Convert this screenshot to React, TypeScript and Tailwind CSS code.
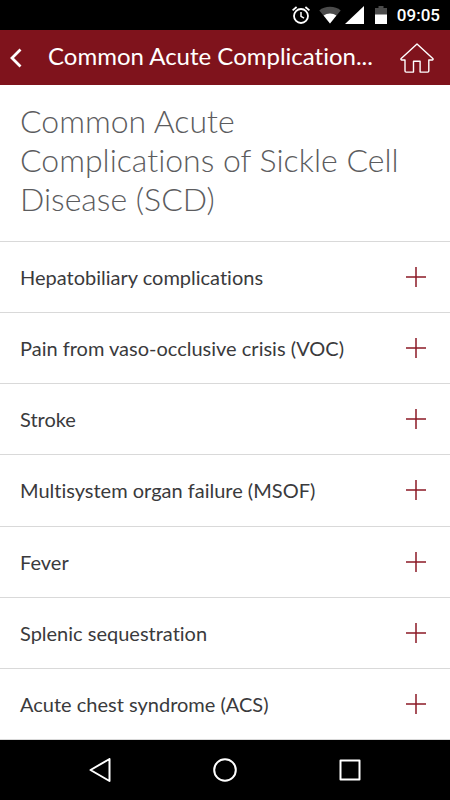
import { useState } from "react";

const COMPLICATIONS = [
  "Hepatobiliary complications",
  "Pain from vaso-occlusive crisis (VOC)",
  "Stroke",
  "Multisystem organ failure (MSOF)",
  "Fever",
  "Splenic sequestration",
  "Acute chest syndrome (ACS)",
];

function StatusBar() {
  return (
    <div className="flex h-[30px] items-center justify-end bg-black pr-2.5 text-white">
      <svg width="20" height="20" viewBox="0 0 20 20" fill="none" stroke="currentColor">
        <circle cx="10" cy="11" r="7" strokeWidth="1.8" />
        <path d="M10 7v4.3l3 1.8" strokeWidth="1.5" />
        <path d="M1.6 5.4 5.6 2M18.4 5.4 14.4 2" strokeWidth="1.8" />
      </svg>
      <svg className="ml-2" width="22" height="18" viewBox="0 0 22 18">
        <path d="M11 17.5 0.3 4.4C3 2.2 6.8.8 11 .8s8 1.4 10.7 3.6z" fill="#4b4b4b" />
        <path d="M11 17.5 4.6 9.6C6.4 8.1 8.6 7.4 11 7.4s4.6.7 6.4 2.2z" fill="currentColor" />
      </svg>
      <svg className="ml-1" width="20" height="18" viewBox="0 0 20 18">
        <path d="M19 0v18H0z" fill="currentColor" />
      </svg>
      <svg className="ml-2.5" width="12" height="18" viewBox="0 0 12 18">
        <path d="M3.5 0h5v2H12v7H0V2h3.5z" fill="#4b4b4b" />
        <path d="M0 8.5h12V18H0z" fill="currentColor" />
      </svg>
      <span className="ml-2.5 font-[Roboto,sans-serif] text-[17px] leading-5 font-medium">09:05</span>
    </div>
  );
}

function AppBar() {
  return (
    <header className="flex h-[55px] items-center bg-[#7f131c] pr-4 pl-2.5 text-white">
      <button type="button" aria-label="Back" className="flex w-[38px] shrink-0">
        <svg width="12" height="20" viewBox="0 0 12 20" fill="none" stroke="currentColor" strokeWidth="2.8">
          <path d="M10.5 1.5 2 10l8.5 8.5" />
        </svg>
      </button>
      <div className="min-w-0 flex-1 truncate pb-1 text-2xl leading-7">Common Acute Complication...</div>
      <button type="button" aria-label="Home" className="shrink-0">
        <svg width="34" height="30" viewBox="0 0 34 30" fill="none" stroke="currentColor" strokeWidth="1.4" strokeLinejoin="round">
          <path d="M17 .9 1.2 15.5c-.6.6-.2 1.5.6 1.5H5v11c0 .8.3 1.1 1.1 1.1h7.4V18.3h6.6v10.8h7.6c.8 0 1.1-.3 1.1-1.1V17h3.4c.8 0 1.2-.9.6-1.5z" />
        </svg>
      </button>
    </header>
  );
}

function ComplicationRow({ label }: { label: string }) {
  const [open, setOpen] = useState(false);

  return (
    <li className="flex min-h-[71px] flex-1 border-b border-[#d9d9d9]">
      <button
        type="button"
        aria-expanded={open}
        onClick={() => setOpen(!open)}
        className="flex flex-1 items-center justify-between pr-6 pl-5 text-left text-[20px] leading-6 text-[#3a3a3c]"
      >
        {label}
        <svg className="shrink-0 text-[#8c1a26]" width="20" height="20" viewBox="0 0 20 20" stroke="currentColor" strokeWidth="1.5">
          <path d={open ? "M0 10h20" : "M0 10h20M10 0v20"} />
        </svg>
      </button>
    </li>
  );
}

function NavBar() {
  return (
    <nav className="flex h-[60px] items-center justify-center gap-[101px] bg-black text-white">
      <button type="button" aria-label="Back">
        <svg width="24" height="24" viewBox="0 0 24 24" fill="none" stroke="currentColor" strokeWidth="2" strokeLinejoin="round">
          <path d="M21.5 1v22L2.500 12z" />
        </svg>
      </button>
      <button type="button" aria-label="Home">
        <svg width="24" height="24" viewBox="0 0 24 24" fill="none" stroke="currentColor" strokeWidth="2">
          <circle cx="12" cy="12" r="10.8" />
        </svg>
      </button>
      <button type="button" aria-label="Recent apps">
        <svg width="24" height="24" viewBox="0 0 24 24" fill="none" stroke="currentColor" strokeWidth="2" strokeLinejoin="round">
          <path d="M2.5 2.5h19v19h-19z" />
        </svg>
      </button>
    </nav>
  );
}

export default function App() {
  return (
    <div className="flex min-h-screen flex-col bg-white font-[Lato,sans-serif] [font-variant-ligatures:none]">
      <StatusBar />
      <AppBar />
      <main className="flex flex-1 flex-col">
        <h1 className="border-b border-[#d9d9d9] px-5 pt-4 pb-[23px] text-[32px] leading-[39px] font-light text-[#5c5c5e]">
          Common Acute Complications of Sickle Cell Disease (SCD)
        </h1>
        <ul className="flex flex-1 flex-col">
          {COMPLICATIONS.map((label) => (
            <ComplicationRow key={label} label={label} />
          ))}
        </ul>
      </main>
      <NavBar />
    </div>
  );
}
